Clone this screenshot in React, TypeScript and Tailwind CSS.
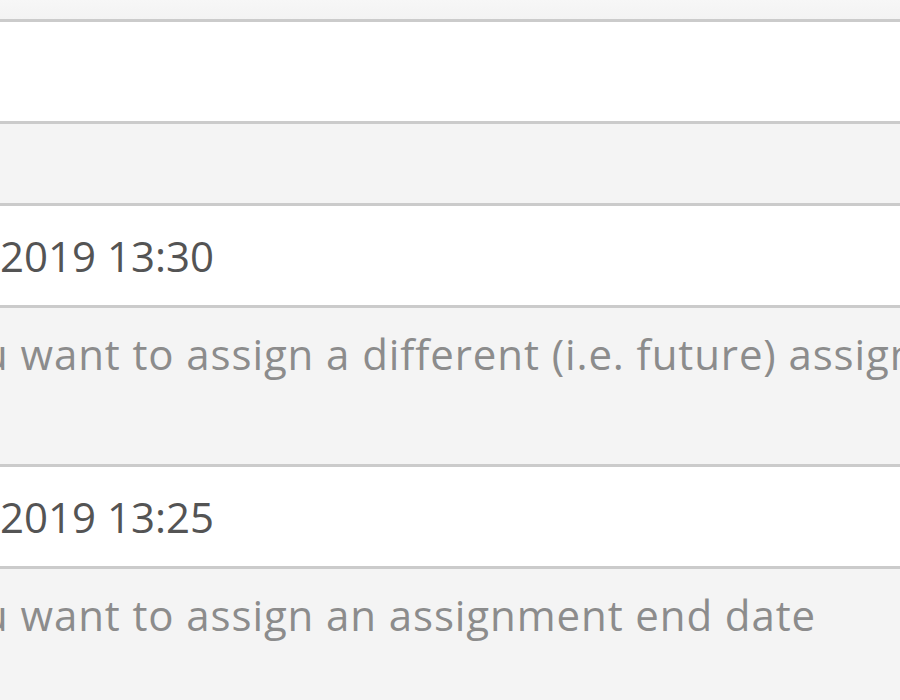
function Field({ value }: { value?: string }) {
  return (
    <div className="h-[105px] border-y-[3px] border-[#cbcbcb] bg-white flex items-center overflow-hidden">
      <span className="whitespace-nowrap text-[42px] leading-[56px] text-[#545454]">{value}</span>
    </div>
  );
}

function Help({ text }: { text: string }) {
  return (
    <div className="h-[156px] pt-[18px] overflow-hidden">
      <p className="whitespace-nowrap -ml-[18px] text-[42px] leading-[56px] tracking-[0.9px] text-[#8c8c8c]">{text}</p>
    </div>
  );
}

export default function App() {
  return (
    <div className="h-[700px] w-[900px] overflow-hidden bg-[#f4f4f4] font-['Open_Sans',sans-serif]">
      <div className="h-[19px] bg-gradient-to-b from-[#f7f7f7] to-[#f3f3f3]" />
      <Field />
      <div className="h-[79px]" />
      <Field value="2019 13:30" />
      <Help text="u want to assign a different (i.e. future) assignment start date" />
      <Field value="2019 13:25" />
      <Help text="u want to assign an assignment end date" />
    </div>
  );
}
